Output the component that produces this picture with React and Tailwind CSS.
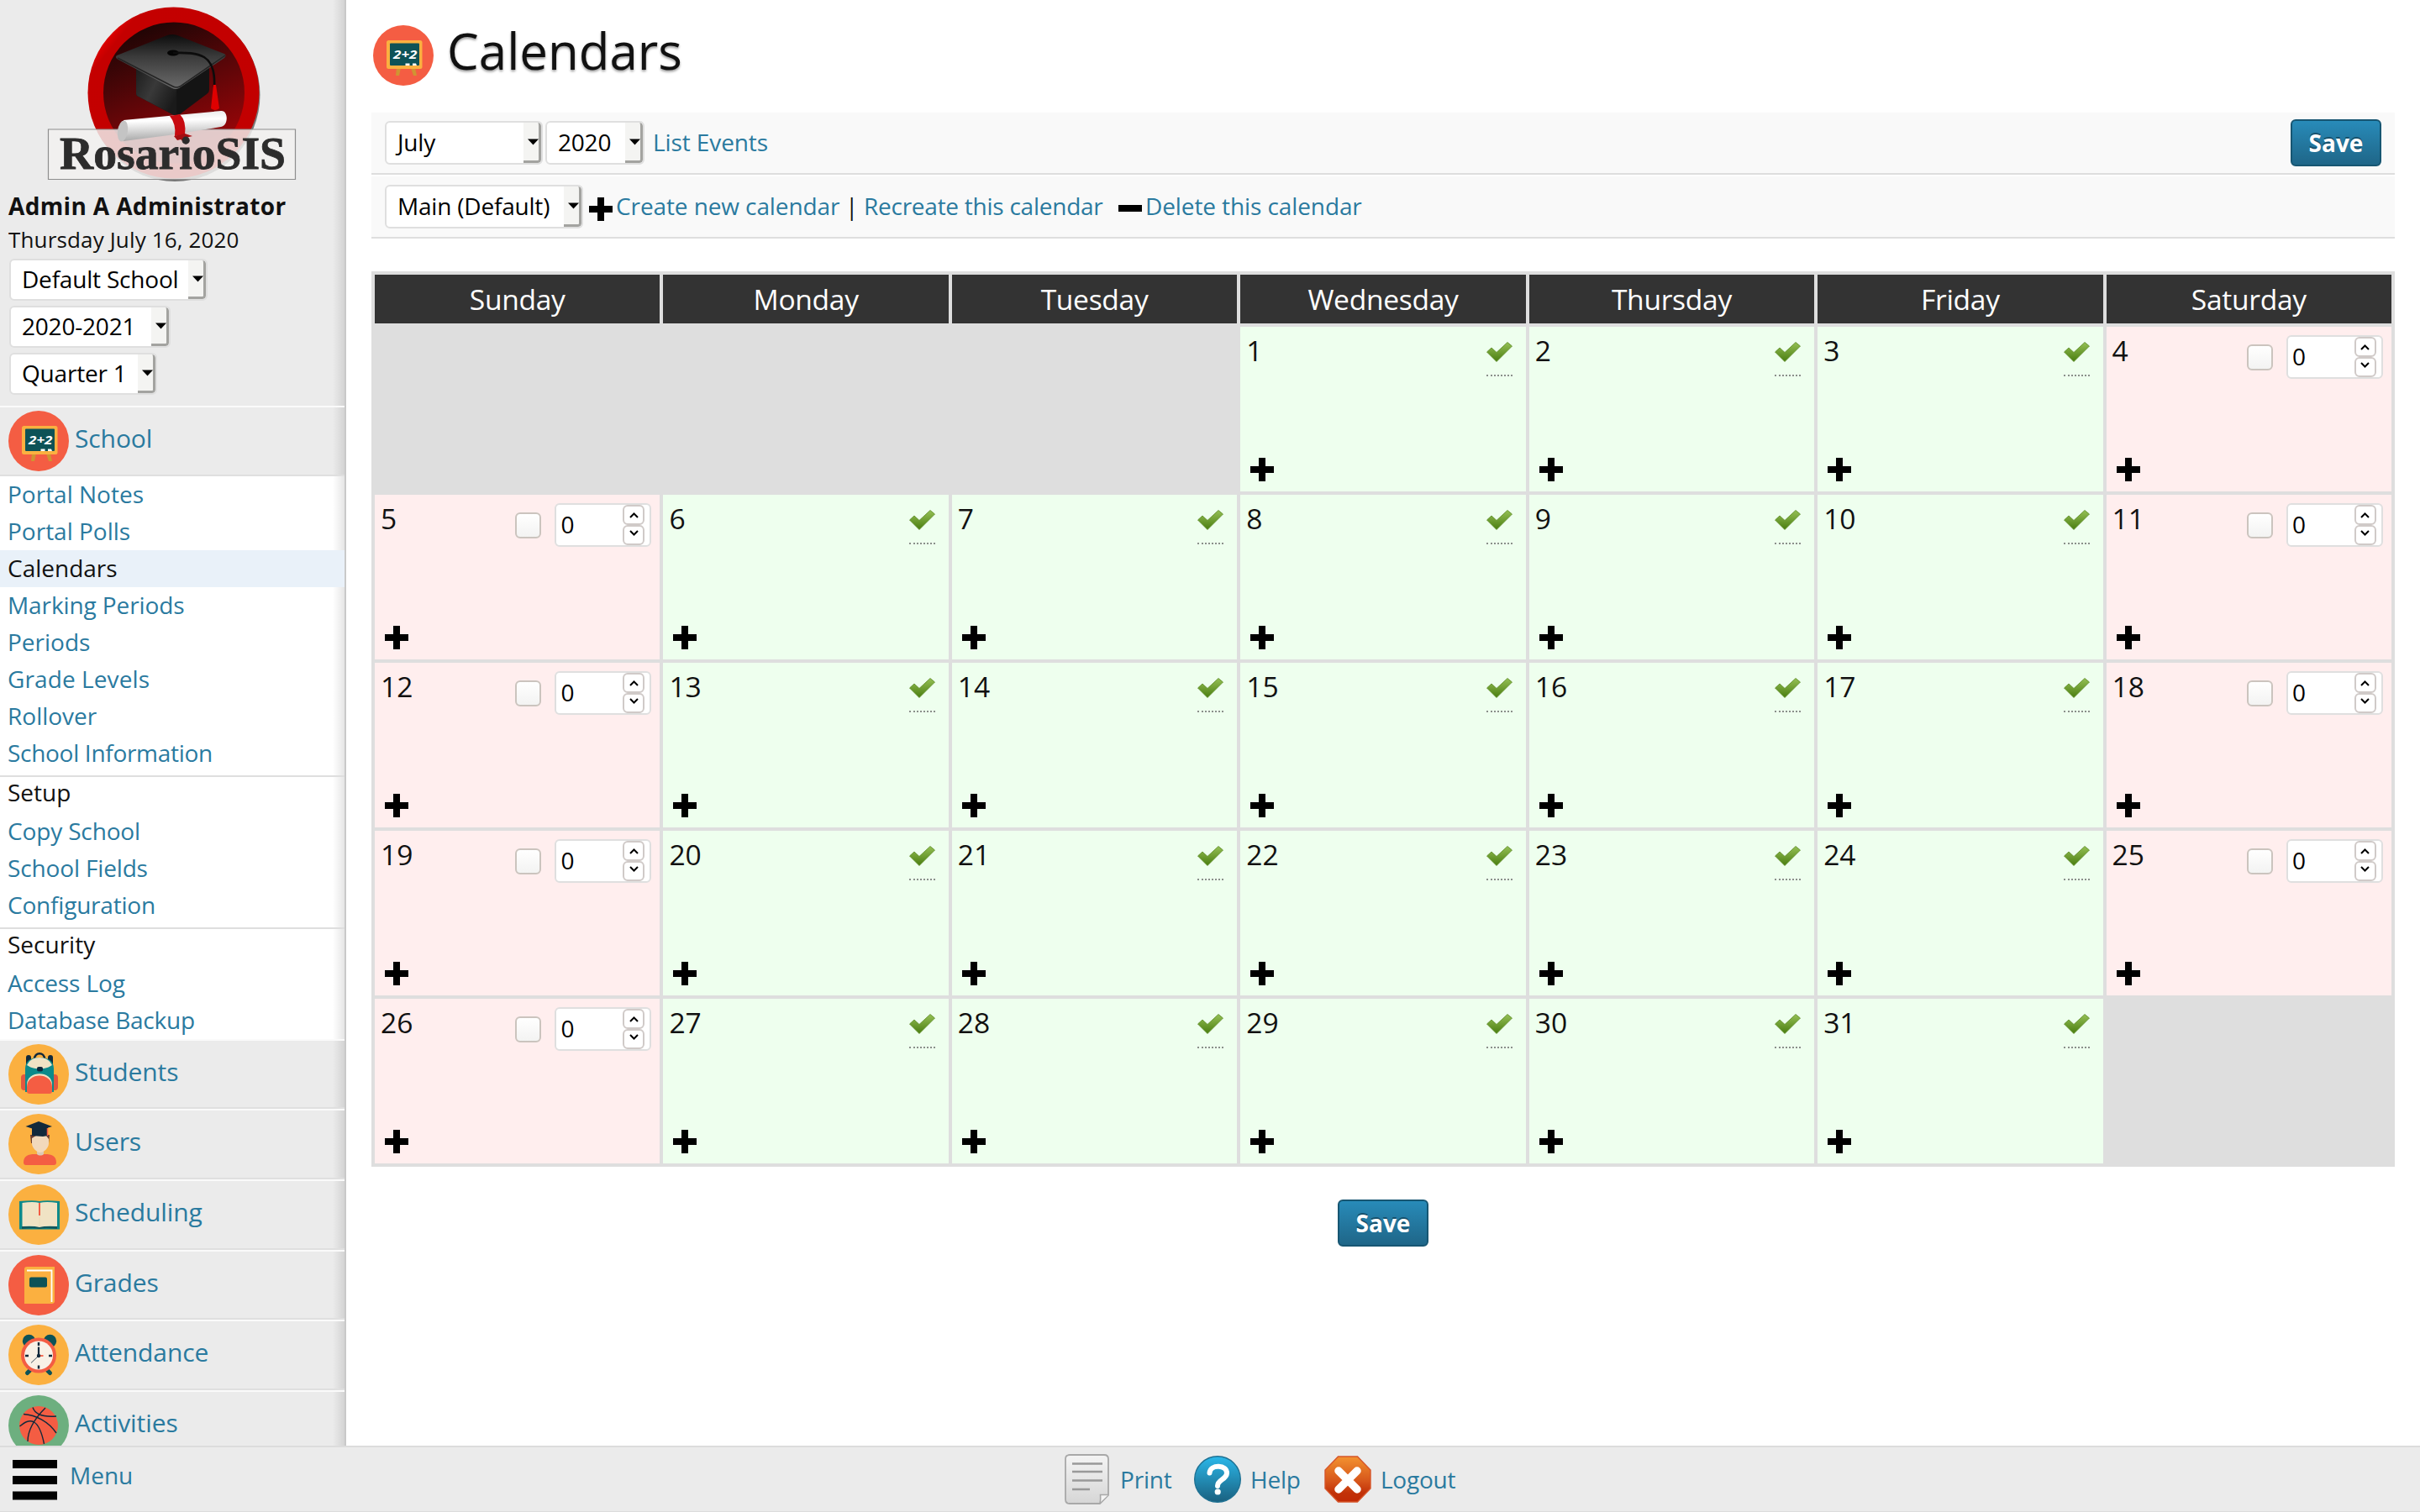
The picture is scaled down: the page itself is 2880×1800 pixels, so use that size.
import React from 'react';

const LINK = 'text-[#2a7a9f]';

function SchoolIcon() {
  return (
    <svg viewBox="0 0 72 72" className="block h-[72px] w-[72px] shrink-0">
      <circle cx="36" cy="36" r="36" fill="#f45d43" />
      <path d="M28 51h5l-2 9h-4zM45 51h5l2 9h-4z" fill="#d09432" />
      <rect x="16" y="18" width="42.5" height="34" rx="2.5" fill="#fbb040" />
      <rect x="20" y="21.500" width="35" height="26.500" rx="1" fill="#0d5257" />
      <text x="24" y="39.500" fontFamily="Open Sans, sans-serif" fontSize="15" fontWeight="700" fontStyle="italic" fill="#fff" textLength="28.500" lengthAdjust="spacingAndGlyphs">2+2</text>
      <path d="M38.500 45.500h5v2.500h-5zM47 45.500h4l1 2.500h-5z" fill="#fff" />
    </svg>
  );
}

function StudentsIcon() {
  return (
    <svg viewBox="0 0 72 72" className="block h-[72px] w-[72px] shrink-0">
      <circle cx="36" cy="36" r="36" fill="#fbb040" />
      <rect x="15" y="36" width="44" height="19" rx="4" fill="#e2573f" />
      <path d="M21 26V16q0-3 3-3t3 3v8zM47 26V16q0-3 3-3t3 3v8z" fill="#11293b" />
      <path d="M31 18c0-9 12-9 12 0" fill="none" stroke="#11293b" strokeWidth="2.600" />
      <path d="M20 30c0-10 6-14 17-14s17 4 17 14v27H20z" fill="#0c8a8a" />
      <path d="M22 25c3-6 8-9 15-9s12 3 15 9c-4 3-9 4.500-15 4.500S26 28 22 25z" fill="#f0e3c4" />
      <rect x="34" y="27" width="7" height="5.500" rx="2" fill="#11293b" />
      <path d="M22 48c0-17 30-17 30 0v7H22z" fill="#f0e3c4" />
      <path d="M22 51c0-18 30-18 30 0v5q0 3-3 3H25q-3 0-3-3z" fill="#f45d43" />
    </svg>
  );
}

function UsersIcon() {
  return (
    <svg viewBox="0 0 72 72" className="block h-[72px] w-[72px] shrink-0">
      <circle cx="36" cy="36" r="36" fill="#fbb040" />
      <path d="M26 25h23l-1 10h-2l-2-8H33l-4 8h-2z" fill="#6b3d2e" />
      <path d="M34 42h8v8h-8z" fill="#dcc9b4" />
      <path d="M28 29l5-3h12l3 4v5c0 6-6 11-10 11s-10-5-10-11z" fill="#f2d9bb" />
      <path d="M18 58c0-8 6-10 13-10h3c2 2 6 2 8 0h2c7 0 13 2 13 10q0 3-3 3H21q-3 0-3-3z" fill="#f45d43" />
      <path d="M28 16h19v10l-6 1-13-1z" fill="#11293b" />
      <path d="M20.500 15L36 9l16 6-16 5z" fill="#11293b" />
      <path d="M46.500 17v9" stroke="#f45d43" strokeWidth="1.500" />
    </svg>
  );
}

function SchedulingIcon() {
  return (
    <svg viewBox="0 0 72 72" className="block h-[72px] w-[72px] shrink-0">
      <circle cx="36" cy="36" r="36" fill="#fbb040" />
      <path d="M13 20q17-1.500 24 0 7-1.500 24 0v33.500H13z" fill="#0c8a8a" />
      <path d="M16 50h42v3q-14-1.500-21 0-7-1.500-21 0z" fill="#11565c" />
      <path d="M16.500 22q13-2 20.500 0 8-2 21 0v28q-14-1-21 1-7-2-20.500-1z" fill="#f0e3c4" />
      <path d="M37 36v14" stroke="#e9dab8" strokeWidth="0.800" />
      <path d="M37 22v15" stroke="#f45d43" strokeWidth="2" />
    </svg>
  );
}

function GradesIcon() {
  return (
    <svg viewBox="0 0 72 72" className="block h-[72px] w-[72px] shrink-0">
      <circle cx="36" cy="36" r="36" fill="#f45d43" />
      <path d="M19 17q0-3 3-3h33v42q-1 2-3 2H19z" fill="#fbb040" />
      <path d="M22 18.500h29.500V56" fill="none" stroke="#fff" strokeWidth="1.800" />
      <rect x="25" y="26.500" width="21" height="12" rx="2" fill="#0d5257" />
    </svg>
  );
}

function AttendanceIcon() {
  return (
    <svg viewBox="0 0 72 72" className="block h-[72px] w-[72px] shrink-0">
      <circle cx="36" cy="36" r="36" fill="#fbb040" />
      <circle cx="24.500" cy="19.500" r="7.700" fill="#0d5257" />
      <circle cx="49.500" cy="19.500" r="7.700" fill="#0d5257" />
      <path d="M27 53l-4.500 4.500M45 53l4.500 4.500" stroke="#0d5257" strokeWidth="5" strokeLinecap="round" />
      <circle cx="36" cy="36.500" r="21" fill="#f45d43" />
      <circle cx="36" cy="36.500" r="17" fill="#f8f1e6" />
      <path d="M36 21v4M36 48.500v4M20 37h4M48 37h4" stroke="#11293b" strokeWidth="2.400" />
      <path d="M36 26.500V37" stroke="#11293b" strokeWidth="2.200" />
      <path d="M36 37h5.500" stroke="#f45d43" strokeWidth="1.800" />
      <path d="M36 37l-9 8.500" stroke="#11293b" strokeWidth="0.800" />
      <circle cx="36" cy="37" r="2.200" fill="#11293b" />
    </svg>
  );
}

function ActivitiesIcon() {
  return (
    <svg viewBox="0 0 72 72" className="block h-[72px] w-[72px] shrink-0">
      <circle cx="36" cy="36" r="36" fill="#6daf7f" />
      <circle cx="36" cy="36" r="23" fill="#f45d43" />
      <g fill="none" stroke="#11293b" strokeWidth="1.400">
        <path d="M44 15C33 26 23 40 23 55" />
        <path d="M29 14.500c3 9 15 11.500 28 10.500" />
        <path d="M18 22.500c15 1 30 9 39 22.500" />
        <path d="M13.500 37c6-5 11-8 17-5 7 4 10 16 12 26" />
      </g>
    </svg>
  );
}

function Logo() {
  return (
    <svg viewBox="0 0 410 223" className="block h-[223px] w-[410px] shrink-0">
      <defs>
        <linearGradient id="inner" x1="0.300" y1="0" x2="0.700" y2="1">
          <stop offset="0" stopColor="#1c0505" />
          <stop offset="0.450" stopColor="#5a0608" />
          <stop offset="1" stopColor="#a50508" />
        </linearGradient>
        <linearGradient id="board" x1="0" y1="0" x2="0" y2="1">
          <stop offset="0" stopColor="#0c0c0c" />
          <stop offset="0.400" stopColor="#3a3a3a" />
          <stop offset="1" stopColor="#6b6b6b" />
        </linearGradient>
        <linearGradient id="capLeft" x1="0" y1="0" x2="1" y2="0.600">
          <stop offset="0" stopColor="#1c1c1c" />
          <stop offset="0.500" stopColor="#393939" />
          <stop offset="1" stopColor="#1a1a1a" />
        </linearGradient>
        <linearGradient id="paper" x1="0" y1="0" x2="0.100" y2="1">
          <stop offset="0" stopColor="#e4e4e4" />
          <stop offset="0.350" stopColor="#ffffff" />
          <stop offset="1" stopColor="#a9a9a9" />
        </linearGradient>
        <linearGradient id="ring" x1="0" y1="0" x2="1" y2="0.800">
          <stop offset="0" stopColor="#ff1010" />
          <stop offset="0.140" stopColor="#e80000" />
          <stop offset="0.200" stopColor="#c40000" />
          <stop offset="1" stopColor="#c20000" />
        </linearGradient>
      </defs>
      <ellipse cx="208" cy="113" rx="101.500" ry="103" fill="#777" />
      <circle cx="206.500" cy="110.500" r="102" fill="url(#ring)" />
      <circle cx="207" cy="110.500" r="84" fill="url(#inner)" />
      <path d="M162 80v31q0 3 3 4l42 22q4 2 7-1l32-24q3-2 3-5V78z" fill="#141414" />
      <path d="M162 80v31q0 3 3 4l42 22q2 1 3 0V104z" fill="url(#capLeft)" />
      <path d="M139 66l60-24q6-2 12 0l56 22q3 2 0 5l-54 36q-4 2-8 0l-64-34q-5-2-2-5z" fill="url(#board)" />
      <path d="M140 69l66 34q4 2 8 0l54-37" fill="none" stroke="#242424" strokeWidth="1.500" />
      <ellipse cx="206" cy="63" rx="7" ry="3.500" fill="#050505" />
      <path d="M206 63c31-1 51 1 49 40" fill="none" stroke="#0c0c0c" strokeWidth="2.600" />
      <path d="M254 101h3l4 28q-5 4-10 0z" fill="#e00000" />
      <path d="M57.500 154h294v59.500h-294z" fill="#f2f1f0" fillOpacity="0.840" stroke="#8e8e8e" strokeWidth="1.200" />
      <path d="M147 143l116-11c9-1 9 18 0 19l-62 10-54 7z" fill="url(#paper)" />
      <ellipse cx="146" cy="156" rx="6" ry="12.500" fill="#c4c4c4" transform="rotate(8 146 156)" />
      <path d="M202 138l12-2q8 8 6 24l-12 2q2-14-6-24z" fill="#c70a10" />
      <path d="M207 162l13-3 9 3-8 2-2 5-4-3-4 1z" fill="#a50d11" />
      <text x="71" y="201" fontFamily="Liberation Serif, serif" fontSize="54" fontWeight="700" textLength="269" lengthAdjust="spacingAndGlyphs" fill="#2c2c2c" stroke="#2c2c2c" strokeWidth="0.800">RosarioSIS</text>
    </svg>
  );
}

function Plus() {
  return (
    <svg viewBox="0 0 28 28" className="block h-7 w-7 shrink-0">
      <path d="M10 0h8v10h10v8H18v10h-8V18H0v-8h10z" fill="#000" />
    </svg>
  );
}

function Check() {
  return (
    <svg viewBox="0 0 31 24" className="block h-6 w-[31px]">
      <defs>
        <linearGradient id="tick" x1="0" y1="0" x2="0" y2="1">
          <stop offset="0" stopColor="#95c055" />
          <stop offset="1" stopColor="#4a7d10" />
        </linearGradient>
      </defs>
      <path d="M0.500 12l5.500-5 6 5.500L25 0.500l5.500 4.500L12 23.500z" fill="url(#tick)" stroke="#5c8a25" strokeWidth="0.800" strokeLinejoin="round" />
    </svg>
  );
}

function Select({ children, className }) {
  return (
    <div className={`flex shrink-0 overflow-hidden rounded-md border-2 border-[#dfdfdf] bg-white text-[28px] text-black ${className}`}>
      <div className="flex flex-1 items-center whitespace-nowrap pb-0.5 pl-[13px] tracking-[-0.2px]">{children}</div>
      <div className="flex w-[21px] items-center justify-center rounded-r border-r-[3px] border-b-[3px] border-[#a3a3a0] bg-[#f4f4f2]">
        <svg viewBox="0 0 13 8" className="ml-1 block h-2 w-[13px] shrink-0">
          <path d="M0 0.500h13L6.500 7.500z" fill="#000" />
        </svg>
      </div>
    </div>
  );
}

function SaveButton() {
  return (
    <button className="flex h-14 w-[108px] shrink-0 items-center justify-center rounded-md border-2 border-[#175672] bg-linear-to-b from-[#288bb9] to-[#1f6688] text-[28px] font-bold text-white [text-shadow:0_-2px_0_#17516d]">
      Save
    </button>
  );
}

function MenuRow({ icon, label, className }) {
  return (
    <div className={`relative flex shrink-0 items-start bg-[#ebebeb] pl-2.5 pt-1.5 ${className}`}>
      <div className="absolute inset-x-0 top-0 z-10 h-0.5 bg-[#fafafa]" />
      <div className="absolute inset-x-0 bottom-0 z-10 h-0.5 bg-[#dfdfdf]" />
      {icon}
      <span className={`pl-[7px] text-[30px] leading-[66px] tracking-[-0.1px] ${LINK}`}>{label}</span>
    </div>
  );
}

function SubItem({ label, track = '' }) {
  return <div className={`h-11 pl-[9px] leading-[42px] ${track} ${LINK}`}>{label}</div>;
}

function SubHeading({ label }) {
  return (
    <>
      <div className="relative z-10 mt-1 h-0.5 bg-[#dedede]" />
      <div className="h-[43px] pl-[9px] leading-9 text-[#111]">{label}</div>
    </>
  );
}

function Sidebar() {
  return (
    <aside className="relative flex h-full w-[412px] shrink-0 flex-col overflow-hidden border-r-2 border-[#c9c9c9] bg-[#ebebeb]">
      <Logo />
      <div className="h-11 shrink-0 whitespace-nowrap pl-2.5 text-[28px] font-bold leading-[44px] tracking-[0.35px] text-[#111]">Admin A Administrator</div>
      <div className="h-9 shrink-0 pl-2.5 text-[26px] leading-9 tracking-[0.15px] text-[#111]">Thursday July 16, 2020</div>
      <div className="mt-[5px] mb-[13px] flex flex-col gap-1.5 pl-[11px]">
        <Select className="h-[50px] w-[236px]">Default School</Select>
        <Select className="h-[50px] w-[192px]">2020-2021</Select>
        <Select className="h-[50px] w-[176px]">Quarter 1</Select>
      </div>
      <MenuRow icon={<SchoolIcon />} label="School" className="h-[84px]" />
      <div className="shrink-0 bg-white text-[28px]">
        <SubItem label="Portal Notes" />
        <SubItem label="Portal Polls" />
        <div className="relative z-10 h-11 bg-[#e9f1f9] pl-[9px] leading-[42px] text-[#111]">Calendars</div>
        <SubItem label="Marking Periods" track="tracking-[-0.1px]" />
        <SubItem label="Periods" />
        <SubItem label="Grade Levels" track="tracking-[0.1px]" />
        <SubItem label="Rollover" />
        <SubItem label="School Information" track="tracking-[-0.3px]" />
        <SubHeading label="Setup" />
        <SubItem label="Copy School" track="tracking-[-0.15px]" />
        <SubItem label="School Fields" track="tracking-[-0.15px]" />
        <SubItem label="Configuration" track="tracking-[-0.2px]" />
        <SubHeading label="Security" />
        <SubItem label="Access Log" track="tracking-[-0.1px]" />
        <SubItem label="Database Backup" track="tracking-[-0.25px]" />
      </div>
      <MenuRow icon={<StudentsIcon />} label="Students" className="h-[83px]" />
      <MenuRow icon={<UsersIcon />} label="Users" className="h-[84px]" />
      <MenuRow icon={<SchedulingIcon />} label="Scheduling" className="h-[84px]" />
      <MenuRow icon={<GradesIcon />} label="Grades" className="h-[83px]" />
      <MenuRow icon={<AttendanceIcon />} label="Attendance" className="h-[84px]" />
      <MenuRow icon={<ActivitiesIcon />} label="Activities" className="h-[84px]" />
      <div className="absolute inset-y-0 right-0 w-3.5 bg-linear-to-r from-black/0 to-black/10" />
    </aside>
  );
}

function NumberBox() {
  return (
    <div className="flex h-[52px] w-[115px] rounded-md border-2 border-[#dfdfdf] bg-white">
      <span className="flex-1 pl-[5px] text-[28px] leading-[46px] text-black">0</span>
      <div className="mr-1.5 flex w-[26px] flex-col">
        <div className="flex h-6 items-center justify-center rounded-md border-2 border-[#d0cac8]">
          <svg viewBox="0 0 11 7" className="block h-[7px] w-[11px]"><path d="M1 6l4.500-4.500L10 6" fill="none" stroke="#000" strokeWidth="2" /></svg>
        </div>
        <div className="flex h-6 items-center justify-center rounded-md border-2 border-[#d0cac8] pb-1.5">
          <svg viewBox="0 0 11 7" className="block h-[7px] w-[11px]"><path d="M1 1l4.500 4.500L10 1" fill="none" stroke="#000" strokeWidth="2" /></svg>
        </div>
      </div>
    </div>
  );
}

function Day({ day, off }) {
  return (
    <div className={`flex flex-col justify-between pb-3 pl-2 ${off ? 'bg-[#ffeeee]' : 'bg-[#eeffee]'}`}>
      <div className="flex justify-between">
        <span className="-ml-px pt-[5px] text-[33.6px] leading-[46px] text-[#111]">{day}</span>
        {off ? (
          <div className="flex pr-2.5 pt-2.5">
            <div className="mt-[11px] mr-4 h-[31px] w-[31px] rounded-md border-2 border-[#cbc4be] bg-linear-to-b from-white to-[#f3f3f2]" />
            <NumberBox />
          </div>
        ) : (
          <div className="h-[60px] pr-4 pt-[18px]">
            <Check />
            <div className="mt-[15px] w-[31px] border-b-2 border-dotted border-[#8b8f8b]" />
          </div>
        )}
      </div>
      <div className="pl-1"><Plus /></div>
    </div>
  );
}

const WEEKDAYS = ['Sunday', 'Monday', 'Tuesday', 'Wednesday', 'Thursday', 'Friday', 'Saturday'];

function Calendar() {
  return (
    <div className="mt-[39px] grid h-[1066px] grid-cols-7 grid-rows-[58px_repeat(5,196px)] gap-1 bg-[#dedede] p-1">
      {WEEKDAYS.map((d) => (
        <div key={d} className="bg-[#333] text-center text-[33.6px] leading-[58px] tracking-[-0.3px] text-white">{d}</div>
      ))}
      <div className="col-span-3" />
      {Array.from({ length: 31 }, (_, i) => i + 1).map((n) => (
        <Day key={n} day={n} off={n % 7 === 4 || n % 7 === 5} />
      ))}
    </div>
  );
}

function Main() {
  return (
    <main className="flex-1 pl-[30px] pr-[30px] text-[28px]">
      <div className="flex h-[134px] items-start pl-0.5">
        <div className="pt-[30px]"><SchoolIcon /></div>
        <h1 className="pl-4 pt-[19px] text-[60px] leading-[82px] text-[#111] [text-shadow:0_2px_3px_rgba(0,0,0,0.4)]">Calendars</h1>
      </div>
      <div className="flex h-[74px] items-center border-b-2 border-[#dedede] bg-[#f9f9f9] pl-4 pr-4">
        <Select className="h-[52px] w-[188px]">July</Select>
        <Select className="ml-[3px] h-[52px] w-[118px]">2020</Select>
        <span className={`ml-[10px] pb-0.5 tracking-[-0.1px] ${LINK}`}>List Events</span>
        <div className="ml-auto"><SaveButton /></div>
      </div>
      <div className="mt-0.5 flex h-[74px] items-center whitespace-nowrap border-b-2 border-[#dedede] bg-[#f9f9f9] pl-4">
        <Select className="h-[52px] w-[236px]">Main (Default)</Select>
        <div className="ml-[7px] pt-1.5"><Plus /></div>
        <span className={`ml-1 w-[269px] pb-0.5 tracking-[-0.1px] ${LINK}`}>Create new calendar</span>
        <span className="ml-[4px] w-[22px] pb-0.5 text-[#111]">|</span>
        <span className={`w-[303px] pb-0.5 tracking-[-0.25px] ${LINK}`}>Recreate this calendar</span>
        <div className="mt-1 h-2 w-7 bg-black" />
        <span className={`ml-1 pb-0.5 tracking-[-0.1px] ${LINK}`}>Delete this calendar</span>
      </div>
      <Calendar />
      <div className="flex justify-center pt-[39px]"><SaveButton /></div>
    </main>
  );
}

function Footer() {
  return (
    <footer className={`flex h-[79px] shrink-0 border-t-2 border-b border-[#dcdcdc] bg-[#ebebeb] text-[28px] ${LINK}`}>
      <div className="flex w-[1267px] pl-[15px] pt-[15px]">
        <svg viewBox="0 0 53 48" className="block h-12 w-[53px]"><path d="M0 0h53v10H0zM0 19h53v10H0zM0 37.500h53v10H0z" fill="#000" /></svg>
        <span className="-mt-[2px] pl-[15px] leading-10">Menu</span>
      </div>
      <div className="flex items-center">
        <svg viewBox="0 0 53 60" className="block h-[60px] w-[53px]">
          <defs><linearGradient id="sheet" x1="0" y1="0" x2="0" y2="1"><stop offset="0" stopColor="#f4f4f4" /><stop offset="1" stopColor="#d6d6d6" /></linearGradient></defs>
          <path d="M6 1h41q5 0 5 5v43L42 59H6q-5 0-5-5V6q0-5 5-5z" fill="url(#sheet)" stroke="#a8a8a8" strokeWidth="1.800" />
          <path d="M9 11.500h36M9 21h36M9 31.500h36M9 42h21" stroke="#999" strokeWidth="2.600" />
          <path d="M42 58q1-3 0.500-9.500h9.500" fill="#f5f5f5" stroke="#a8a8a8" strokeWidth="1.600" />
        </svg>
        <span className="w-[101px] pb-px pl-[13px] tracking-[-0.2px]">Print</span>
        <svg viewBox="0 0 56 56" className="block h-14 w-14">
          <defs><linearGradient id="blue" x1="0" y1="0" x2="0" y2="1"><stop offset="0" stopColor="#2bb8ea" /><stop offset="1" stopColor="#1a607f" /></linearGradient></defs>
          <circle cx="28" cy="28" r="27.300" fill="url(#blue)" stroke="#1f7193" strokeWidth="1.400" />
          <path d="M18.500 20.500c1-11 21-10 20.500 0.500-0.500 7.500-11 7-11 15" fill="none" stroke="#fff" strokeWidth="6" strokeLinecap="round" />
          <circle cx="28.200" cy="43" r="3.600" fill="#fff" />
        </svg>
        <span className="w-[99px] pb-px pl-[11px] tracking-[-0.2px]">Help</span>
        <svg viewBox="0 0 56 56" className="block h-14 w-14">
          <defs><linearGradient id="orange" x1="0" y1="0" x2="0" y2="1"><stop offset="0" stopColor="#f39230" /><stop offset="0.550" stopColor="#d6551a" /><stop offset="0.800" stopColor="#c23209" /><stop offset="1" stopColor="#c02a06" /></linearGradient></defs>
          <path d="M16.500 1h23L55 17v22L39.500 55h-23L1 39V17z" fill="url(#orange)" stroke="#d6552a" strokeWidth="1.400" />
          <path d="M17 18l22 22M39 18L17 40" stroke="#fff" strokeWidth="9.500" strokeLinecap="round" />
        </svg>
        <span className="pb-px pl-[11px] tracking-[-0.25px]">Logout</span>
      </div>
    </footer>
  );
}

export default function App() {
  return (
    <div className="flex h-[1800px] w-[2880px] flex-col overflow-hidden bg-white font-['Open_Sans',sans-serif]">
      <div className="flex h-[1721px] shrink-0">
        <Sidebar />
        <Main />
      </div>
      <Footer />
    </div>
  );
}
